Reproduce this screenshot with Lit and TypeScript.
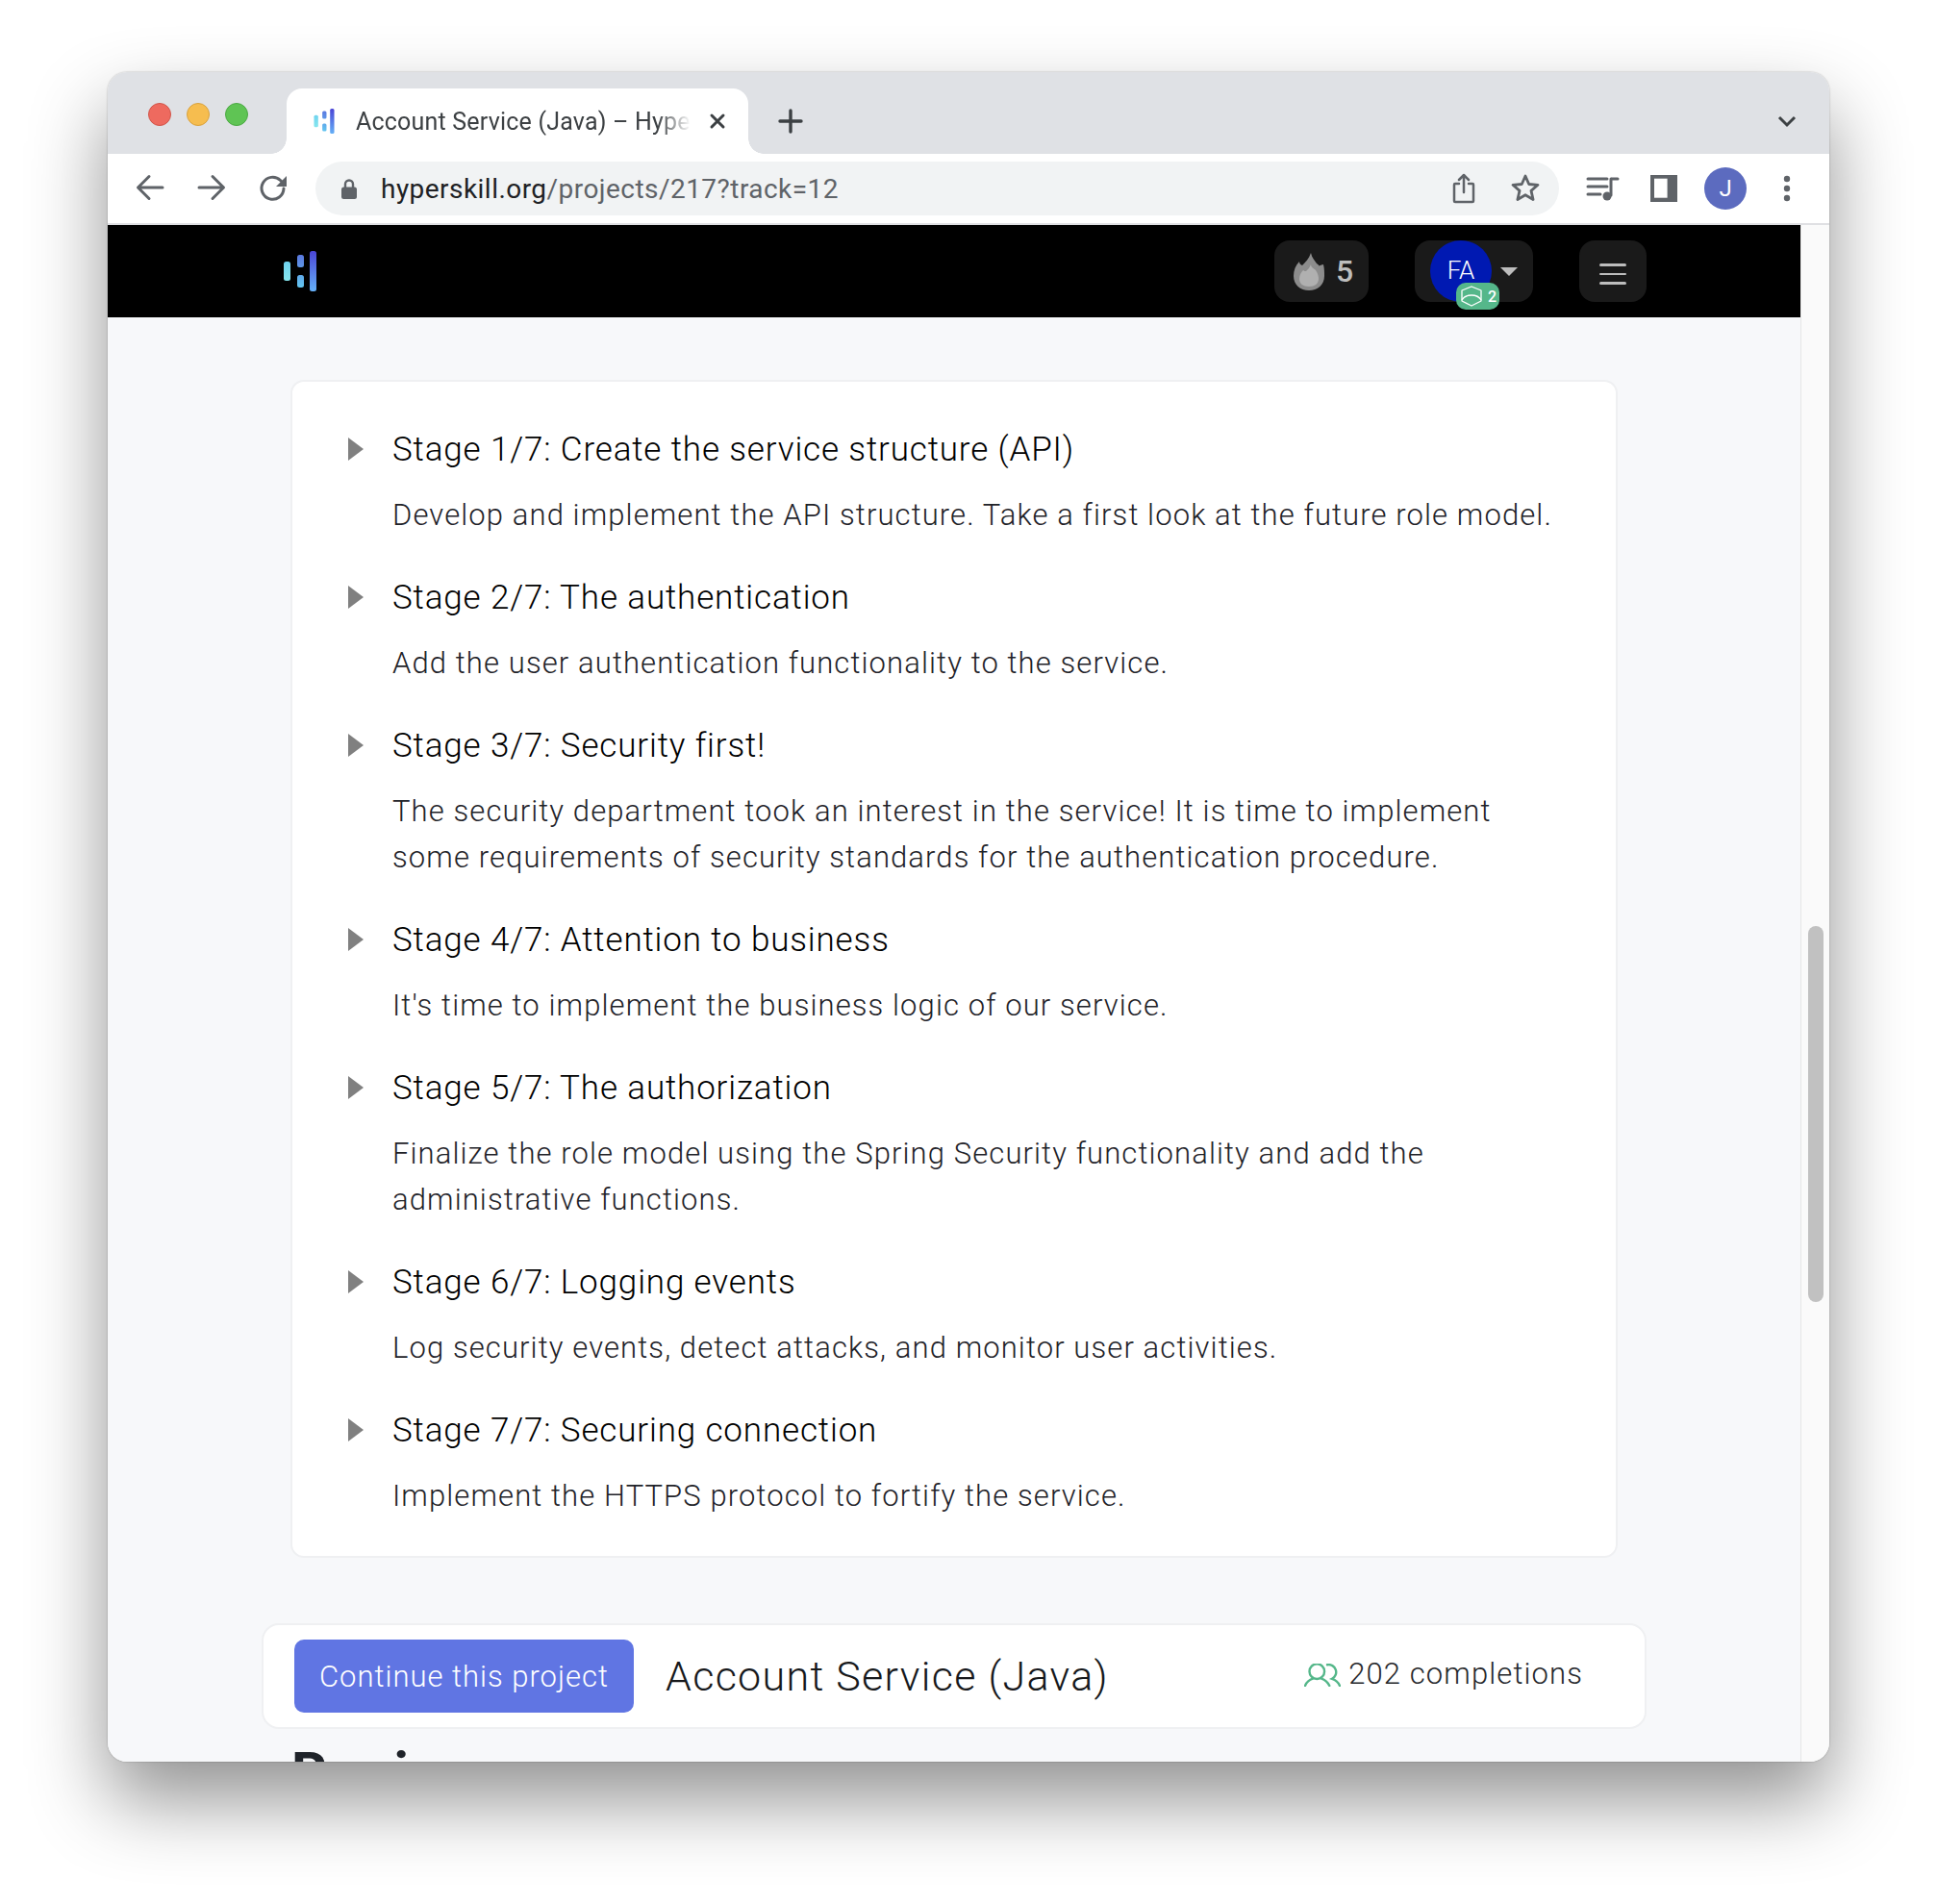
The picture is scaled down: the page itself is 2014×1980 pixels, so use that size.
import { LitElement, css, html, svg } from "lit";
import { customElement } from "lit/decorators.js";

const stages = [
  { title: "Stage 1/7: Create the service structure (API)", text: ["Develop and implement the API structure. Take a first look at the future role model."] },
  { title: "Stage 2/7: The authentication", text: ["Add the user authentication functionality to the service."] },
  { title: "Stage 3/7: Security first!", text: ["The security department took an interest in the service! It is time to implement", "some requirements of security standards for the authentication procedure."] },
  { title: "Stage 4/7: Attention to business", text: ["It's time to implement the business logic of our service."] },
  { title: "Stage 5/7: The authorization", text: ["Finalize the role model using the Spring Security functionality and add the", "administrative functions."] },
  { title: "Stage 6/7: Logging events", text: ["Log security events, detect attacks, and monitor user activities."] },
  { title: "Stage 7/7: Securing connection", text: ["Implement the HTTPS protocol to fortify the service."] },
];

const logo = (id: string, cls: string) => html`<svg class=${cls} viewBox="0 0 34 42">
  <defs>
    <linearGradient id="${id}a" x1="0" y1="0" x2="0" y2="1"><stop offset="0" stop-color="#6fd3ef" /><stop offset="1" stop-color="#86e6ee" /></linearGradient>
    <linearGradient id="${id}b" gradientUnits="userSpaceOnUse" x1="0" y1="4" x2="0" y2="38"><stop offset="0" stop-color="#5a78e0" /><stop offset="1" stop-color="#63c6f0" /></linearGradient>
    <linearGradient id="${id}c" x1="0" y1="0" x2="0" y2="1"><stop offset="0" stop-color="#4a45d6" /><stop offset="1" stop-color="#65b0f7" /></linearGradient>
  </defs>
  <rect x="0" y="11" width="7" height="20" rx="2.5" fill="url(#${id}a)" />
  <rect x="14" y="4" width="7" height="13" rx="2.5" fill="url(#${id}b)" />
  <rect x="14" y="25" width="7" height="13" rx="2.5" fill="url(#${id}b)" />
  <rect x="27" y="0" width="7" height="42" rx="2.5" fill="url(#${id}c)" />
</svg>`;

const icon = (body: unknown, cls = "ico") =>
  html`<svg class=${cls} viewBox="0 0 44 44" fill="none" stroke="#5f6368" stroke-width="3" stroke-linecap="round" stroke-linejoin="round">${body}</svg>`;

@customElement("app-root")
export class AppRoot extends LitElement {
  static styles = css`
    :host {
      display: block;
      width: 2014px;
      height: 1980px;
      box-sizing: border-box;
      padding: 75px 112px 148px 112px;
      background: #fff;
      font-family: Roboto, "Liberation Sans", sans-serif;
      overflow: hidden;
    }
    .window {
      height: 100%;
      display: flex;
      flex-direction: column;
      border-radius: 20px;
      overflow: hidden;
      box-shadow: 0 40px 80px rgba(0, 0, 0, 0.43), 0 0 2px rgba(0, 0, 0, 0.3);
    }

    .strip {
      height: 85px;
      flex: none;
      display: flex;
      align-items: flex-end;
      background: #dfe1e5;
      padding: 0 33px 0 42px;
    }
    .lights {
      align-self: flex-start;
      display: flex;
      gap: 16px;
      margin-top: 32px;
    }
    .light {
      width: 24px;
      height: 24px;
      box-sizing: border-box;
      border-radius: 50%;
      border: 1px solid;
    }
    .red {
      background: #ee6a5f;
      border-color: #d1564b;
    }
    .yellow {
      background: #f6bd4f;
      border-color: #d9a23e;
    }
    .green {
      background: #5fc454;
      border-color: #4ca944;
    }
    .tab {
      position: relative;
      width: 480px;
      height: 68px;
      margin-left: 40px;
      box-sizing: border-box;
      padding: 0 22px 0 28px;
      display: flex;
      align-items: center;
      background: #fff;
      border-radius: 16px 16px 0 0;
    }
    .tab::before,
    .tab::after {
      content: "";
      position: absolute;
      bottom: 0;
      width: 16px;
      height: 16px;
    }
    .tab::before {
      left: -16px;
      background: radial-gradient(circle at 0 0, #dfe1e5 15.5px, #fff 16px);
    }
    .tab::after {
      right: -16px;
      background: radial-gradient(circle at 100% 0, #dfe1e5 15.5px, #fff 16px);
    }
    .favicon {
      width: 22px;
      height: 26px;
      flex: none;
    }
    .tab-title {
      margin-left: 22px;
      width: 348px;
      flex: none;
      overflow: hidden;
      white-space: nowrap;
      font-size: 25px;
      letter-spacing: 0.2px;
      color: #3c4043;
      -webkit-mask-image: linear-gradient(to right, #000 90%, transparent 100%);
      mask-image: linear-gradient(to right, #000 90%, transparent 100%);
    }
    .tab-close {
      width: 20px;
      height: 20px;
      margin-left: 18px;
      flex: none;
    }
    .plus {
      width: 28px;
      height: 28px;
      margin: 0 0 20px 30px;
      flex: none;
    }
    .chevron {
      width: 22px;
      height: 14px;
      margin: 0 0 27px auto;
      flex: none;
    }

    .toolbar {
      height: 72px;
      flex: none;
      display: flex;
      align-items: center;
      gap: 20px;
      padding-left: 22px;
      background: #fff;
      border-bottom: 2px solid #dfe0e3;
    }
    .ico {
      width: 44px;
      height: 44px;
      flex: none;
    }
    .panel-ico {
      margin-left: 1px;
    }
    .omnibox {
      width: 1293px;
      height: 56px;
      margin: 0 2px;
      flex: none;
      box-sizing: border-box;
      display: flex;
      align-items: center;
      padding: 0 13px 0 24px;
      border-radius: 28px;
      background: #f1f3f4;
    }
    .lock {
      width: 22px;
      height: 28px;
      flex: none;
    }
    .url {
      margin-left: 22px;
      font-size: 28px;
      color: #5f6368;
      white-space: nowrap;
      letter-spacing: 0.46px;
    }
    .url b {
      font-weight: 400;
      color: #202124;
    }
    .omni-end {
      margin-left: auto;
      display: flex;
      gap: 20px;
    }
    .chrome-avatar {
      width: 44px;
      height: 44px;
      flex: none;
      border-radius: 50%;
      background: #5c6bbf;
      color: #fff;
      font-size: 24px;
      display: flex;
      align-items: center;
      justify-content: center;
    }

    .viewport {
      flex: 1;
      min-height: 0;
      display: flex;
    }
    .page {
      flex: 1;
      min-width: 0;
      background: #f7f8fa;
      overflow: hidden;
    }
    .scrollbar {
      width: 30px;
      flex: none;
      box-sizing: border-box;
      padding: 729px 6px 0 7px;
      background: #fafafa;
      border-left: 1px solid #e6e6e6;
    }
    .thumb {
      height: 391px;
      border-radius: 8px;
      background: #c1c1c1;
    }

    .header {
      height: 96px;
      box-sizing: border-box;
      display: flex;
      align-items: center;
      gap: 48px;
      padding: 0 160px 0 183px;
      background: #000;
    }
    .logo {
      width: 34px;
      height: 42px;
      margin-right: auto;
    }
    .pill {
      position: relative;
      height: 64px;
      box-sizing: border-box;
      display: flex;
      align-items: center;
      border-radius: 16px;
      background: #1a1a1a;
      color: #bdbdbd;
    }
    .streak {
      width: 98px;
      padding-left: 20px;
      gap: 12px;
      font-size: 32px;
      font-weight: 500;
    }
    .flame {
      width: 32px;
      height: 39px;
    }
    .user {
      width: 123px;
      padding-left: 16px;
    }
    .user-circle {
      width: 64px;
      height: 64px;
      box-sizing: border-box;
      padding-bottom: 2px;
      border-radius: 50%;
      background: #0019b2;
      color: #fff;
      font-size: 26px;
      font-weight: 300;
      display: flex;
      align-items: center;
      justify-content: center;
    }
    .caret {
      width: 0;
      height: 0;
      margin-left: 9px;
      border-left: 9px solid transparent;
      border-right: 9px solid transparent;
      border-top: 9px solid #bdbdbd;
    }
    .badge {
      position: absolute;
      left: 43px;
      top: 44px;
      width: 45px;
      height: 28px;
      box-sizing: border-box;
      padding-left: 5px;
      display: flex;
      align-items: center;
      gap: 6px;
      border-radius: 10px;
      background: #55b78a;
      color: #fff;
      font-size: 16px;
      font-weight: 500;
    }
    .badge svg {
      width: 22px;
      height: 22px;
    }
    .menu {
      width: 70px;
      padding-top: 6px;
      flex-direction: column;
      justify-content: center;
      gap: 7px;
    }
    .menu i {
      display: block;
      width: 28px;
      height: 2.5px;
      border-radius: 2px;
      background: #bdbdbd;
    }

    .content {
      padding-top: 65px;
    }
    .card {
      width: 1380px;
      margin-left: 190px;
      box-sizing: border-box;
      padding: 45px 50px 38px 58px;
      display: flex;
      flex-direction: column;
      gap: 36px;
      background: #fff;
      border: 2px solid #eff0f2;
      border-radius: 14px;
    }
    .stage-head {
      display: flex;
      align-items: center;
      height: 48px;
    }
    .tri {
      width: 0;
      height: 0;
      margin-top: 1px;
      border-top: 12.5px solid transparent;
      border-bottom: 12.5px solid transparent;
      border-left: 16px solid #808080;
    }
    .stage-title {
      margin: 2px 0 0 30px;
      font-size: 35px;
      font-weight: 300;
      color: #000;
      letter-spacing: 0.85px;
    }
    .stage-text {
      margin: 22px 0 0 46px;
      font-size: 31px;
      font-weight: 300;
      line-height: 48px;
      color: #1f2329;
      letter-spacing: 1.1px;
      white-space: nowrap;
    }
    .bar {
      width: 1440px;
      height: 110px;
      margin: 68px 0 0 160px;
      box-sizing: border-box;
      display: flex;
      align-items: center;
      padding: 0 64px 0 32px;
      background: #fff;
      border: 2px solid #eff0f2;
      border-radius: 18px;
    }
    .continue {
      width: 353px;
      height: 76px;
      display: flex;
      align-items: center;
      justify-content: center;
      border-radius: 10px;
      background: #6075e3;
      color: #fff;
      font-size: 31px;
      font-weight: 300;
      letter-spacing: 1px;
    }
    .bar-title {
      margin-left: 33px;
      font-size: 43px;
      font-weight: 300;
      color: #17191c;
      letter-spacing: 1.3px;
    }
    .completions {
      margin: 0 0 6px auto;
      display: flex;
      align-items: center;
      gap: 8px;
      font-size: 31px;
      font-weight: 300;
      color: #26282c;
      letter-spacing: 1.1px;
    }
    .people {
      width: 38px;
      height: 24px;
      margin-top: 4px;
    }
    .reviews {
      margin: 12px 0 0 191px;
      font-size: 58px;
      font-weight: 700;
      line-height: 66px;
      color: #1f2329;
      letter-spacing: 3px;
    }
  `;

  render() {
    return html`
      <div class="window">
        <div class="strip">
          <div class="lights"><span class="light red"></span><span class="light yellow"></span><span class="light green"></span></div>
          <div class="tab">
            ${logo("fav", "favicon")}
            <span class="tab-title">Account Service (Java) – Hyperskill</span>
            <svg class="tab-close" viewBox="0 0 20 20" fill="none" stroke="#3c4043" stroke-width="3" stroke-linecap="round"><path d="M4 4l12 12M16 4L4 16" /></svg>
          </div>
          <svg class="plus" viewBox="0 0 28 28" fill="none" stroke="#3c4043" stroke-width="3.4" stroke-linecap="round"><path d="M14 3v22M3 14h22" /></svg>
          <svg class="chevron" viewBox="0 0 22 14" fill="none" stroke="#3c4043" stroke-width="3"><path d="M3 3l8 8 8-8" /></svg>
        </div>

        <div class="toolbar">
          ${icon(svg`<path d="M35 21H10M21 9.500L9.500 21 21 32.500" />`)}
          ${icon(svg`<path d="M9 21h25M23 9.500L34.500 21 23 32.500" />`)}
          ${icon(svg`<path d="M33 22a11.500 11.500 0 1 1-3.500-8.500L33 17" /><path d="M36 9v11H25z" fill="#5f6368" stroke="none" />`)}
          <div class="omnibox">
            <svg class="lock" viewBox="0 0 22 28"><path d="M7 13V9.500a4 4 0 0 1 8 0V13" fill="none" stroke="#5f6368" stroke-width="2.400" /><rect x="3" y="12.500" width="16" height="12.500" rx="2.500" fill="#5f6368" /></svg>
            <span class="url"><b>hyperskill.org</b>/projects/217?track=12</span>
            <div class="omni-end">
              ${icon(svg`<g stroke-width="2.500"><path d="M22 26V9M17 13l5-5 5 5" /><path d="M17 17h-4a1 1 0 0 0-1 1v17a1 1 0 0 0 1 1h18a1 1 0 0 0 1-1V18a1 1 0 0 0-1-1h-4" /></g>`)}
              ${icon(svg`<path stroke-width="2.800" d="M22 9l3.700 8.500 9.300.8-7 6.100 2.100 9.100-8.100-4.800-8.100 4.800 2.100-9.100-7-6.100 9.300-.8z" />`)}
            </div>
          </div>
          ${icon(svg`<g stroke-width="3"><path d="M8 12h20M8 20h20M8 28h13" /><path d="M33 12h6M32 12v17" /></g><circle cx="28" cy="30" r="4.500" fill="#5f6368" stroke="none" />`)}
          ${icon(svg`<rect x="8" y="8" width="28" height="28" fill="#5f6368" stroke="none" /><rect x="12" y="11.700" width="13.600" height="20" fill="#fff" stroke="none" />`, "ico panel-ico")}
          <div class="chrome-avatar">J</div>
          ${icon(svg`<g fill="#5f6368" stroke="none"><circle cx="22" cy="12" r="3.200" /><circle cx="22" cy="22" r="3.200" /><circle cx="22" cy="32" r="3.200" /></g>`)}
        </div>

        <div class="viewport">
          <div class="page">
            <div class="header">
              ${logo("top", "logo")}
              <div class="pill streak">
                <svg class="flame" viewBox="0 0 32 39">
                  <path fill="#8c8c8c" d="M18 0c1 5 4 8 6 11 1.500 1 2 1.500 2.500 2.500 1.500-.5 3.500-1.500 4.500-1.500 1 4 1 8 1 12 0 9-7 15-16 15S0 33 0 24c0-6 2-11 6-15 0 2 1 3 3 4 3-3 7-7 9-13z" />
                  <path fill="#b0b0b0" d="M18 12c0 3 3 4 5 6 2 3 3 6 3 9 0 5-4 8-10 8S6 32 6 27c0-4 2-7 4-9 1 1 2 1 3 1 2-2 4-4 5-7z" />
                </svg>
                5
              </div>
              <div class="pill user">
                <div class="user-circle">FA</div>
                <span class="caret"></span>
                <div class="badge">
                  <svg viewBox="0 0 22 22" fill="none" stroke="#fff" stroke-width="1.300" stroke-linejoin="round"><path d="M11 1l10 4v11l-10 5-10-5V5z" /><path d="M1 15c2-3.500 6-5 10-5s8 1.500 10 5" /></svg>
                  2
                </div>
              </div>
              <div class="pill menu"><i></i><i></i><i></i></div>
            </div>

            <div class="content">
              <div class="card">
                ${stages.map(
                  (s) => html`<div>
                    <div class="stage-head"><span class="tri"></span><span class="stage-title">${s.title}</span></div>
                    <div class="stage-text">${s.text.map((l) => html`<div>${l}</div>`)}</div>
                  </div>`
                )}
              </div>
              <div class="bar">
                <div class="continue">Continue this project</div>
                <div class="bar-title">Account Service (Java)</div>
                <div class="completions">
                  <svg class="people" viewBox="0 0 38 24" fill="none" stroke="#55b78a" stroke-width="2.400" stroke-linecap="round">
                    <circle cx="13.300" cy="8.200" r="7.800" />
                    <path d="M1 23c1.500-3.500 4-6 8-7.300M18 15.700c4 1.300 6.500 3.800 8.300 7.300" />
                    <path d="M24 1.200a7.800 7.800 0 0 1 5 14.600c3 1 6.500 3.500 8 7.200" />
                  </svg>
                  202 completions
                </div>
              </div>
              <div class="reviews">Reviews</div>
            </div>
          </div>
          <div class="scrollbar"><div class="thumb"></div></div>
        </div>
      </div>
    `;
  }
}
